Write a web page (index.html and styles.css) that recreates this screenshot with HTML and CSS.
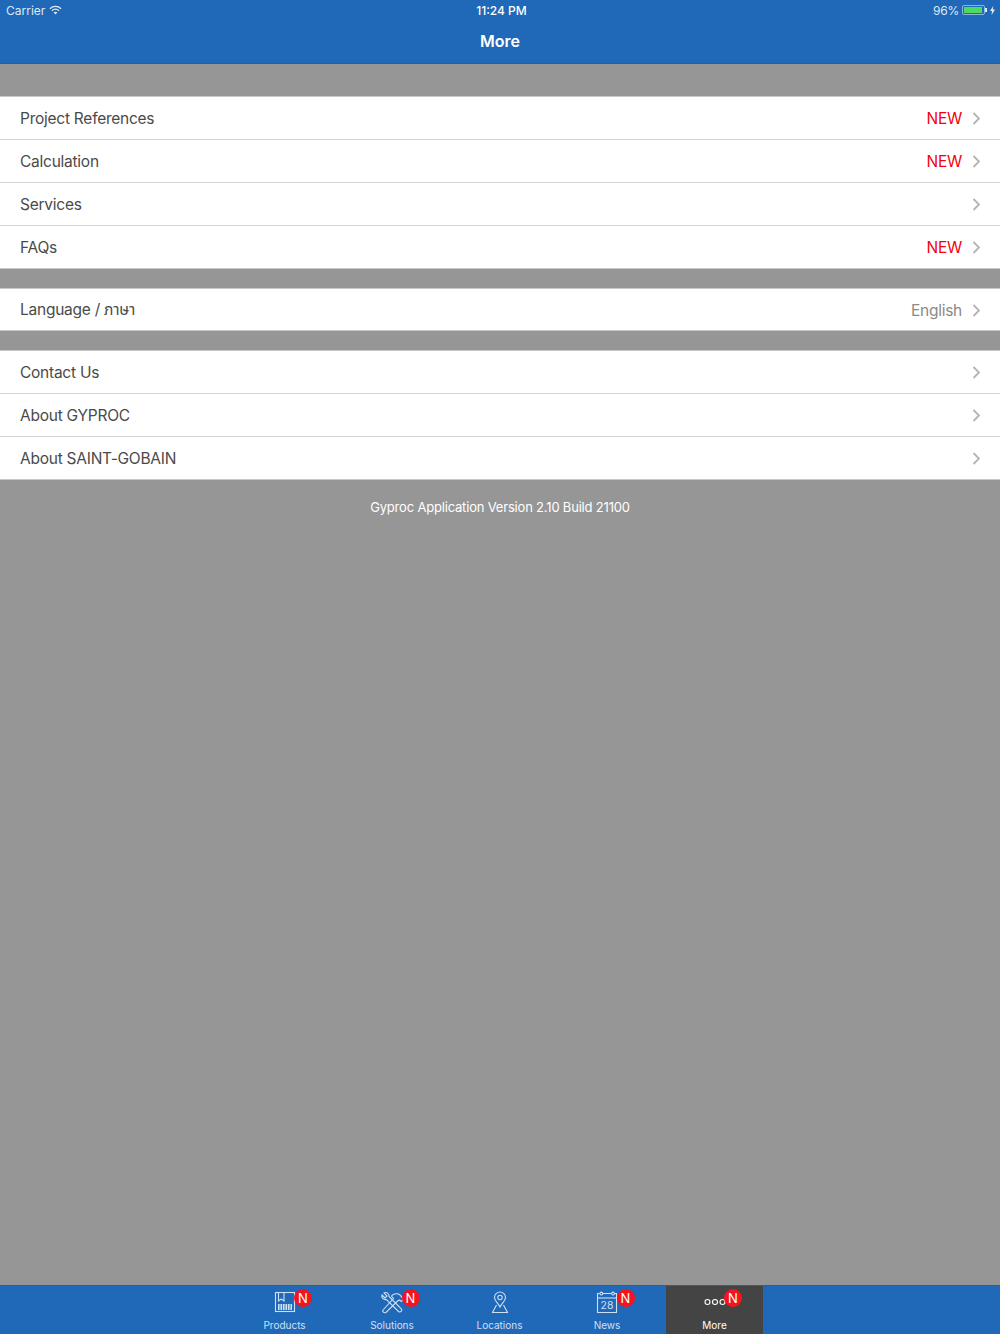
FILE: index.html
```html
<!DOCTYPE html>
<html lang="en">
<head>
  <meta charset="UTF-8" />
  <meta name="viewport" content="width=device-width, initial-scale=1.0" />
  <title>More</title>
  <link rel="stylesheet" href="styles.css">
</head>
<body>
  <header class="top-bar">
    <div class="status-bar">
      <div class="status-left">
        <span>Carrier</span>
        <svg class="wifi" width="13" height="10" viewBox="0 0 14 10">
          <path d="M1 3.6C4.4 .4 9.6 .4 13 3.6" fill="none" stroke="currentColor" stroke-width="1.4"/>
          <path d="M3.2 5.7C5.4 3.8 8.6 3.8 10.8 5.7" fill="none" stroke="currentColor" stroke-width="1.4"/>
          <path d="M5 7.6 7 9.8 9 7.6C7.8 6.6 6.2 6.6 5 7.6Z" fill="currentColor"/>
        </svg>
      </div>
      <div class="status-time">11:24 PM</div>
      <div class="status-right">
        <span class="status-battery-text">96%</span>
        <div class="battery"><div class="battery-level"></div></div>
        <div class="battery-tip"></div>
        <svg class="bolt" width="5" height="9" viewBox="0 0 5 9"><path d="M3.2 0 0 5h2L1.6 9 5 3.6H2.9Z" fill="currentColor"/></svg>
      </div>
    </div>
    <h1 class="nav-title">More</h1>
  </header>

  <main class="content">
    <ul class="group group-first">
      <li class="row"><span>Project References</span><span class="row-value new">NEW</span><svg class="chevron" width="8" height="13" viewBox="0 0 8 13"><path d="M1.500 1l5.500 5.500L1.500 12"/></svg></li>
      <li class="row"><span>Calculation</span><span class="row-value new">NEW</span><svg class="chevron" width="8" height="13" viewBox="0 0 8 13"><path d="M1.500 1l5.500 5.500L1.500 12"/></svg></li>
      <li class="row"><span>Services</span><svg class="chevron" width="8" height="13" viewBox="0 0 8 13"><path d="M1.500 1l5.500 5.500L1.500 12"/></svg></li>
      <li class="row"><span>FAQs</span><span class="row-value new">NEW</span><svg class="chevron" width="8" height="13" viewBox="0 0 8 13"><path d="M1.500 1l5.500 5.500L1.500 12"/></svg></li>
    </ul>
    <ul class="group group-language">
      <li class="row"><span>Language / ภาษา</span><span class="row-value">English</span><svg class="chevron" width="8" height="13" viewBox="0 0 8 13"><path d="M1.500 1l5.500 5.500L1.500 12"/></svg></li>
    </ul>
    <ul class="group">
      <li class="row"><span>Contact Us</span><svg class="chevron" width="8" height="13" viewBox="0 0 8 13"><path d="M1.500 1l5.500 5.500L1.500 12"/></svg></li>
      <li class="row"><span>About GYPROC</span><svg class="chevron" width="8" height="13" viewBox="0 0 8 13"><path d="M1.500 1l5.500 5.500L1.500 12"/></svg></li>
      <li class="row"><span>About SAINT-GOBAIN</span><svg class="chevron" width="8" height="13" viewBox="0 0 8 13"><path d="M1.500 1l5.500 5.500L1.500 12"/></svg></li>
    </ul>
    <p class="version">Gyproc Application Version 2.10 Build 21100</p>
  </main>

  <nav class="tab-bar">
    <div class="tab">
      <svg class="tab-icon" width="24" height="24" viewBox="0 0 24 24">
        <rect x="2.500" y="3.500" width="19" height="19"/>
        <path d="M5.500 3.500V12L8.200 10 11 12V3.500"/>
        <path class="solid" d="M5 15H19V21H5Z"/>
        <path class="cut" d="M7 15V21M9.500 15V21M12 15V21M14.500 15V21M17 15V21"/>
      </svg>
      <span class="tab-badge">N</span>
      <span class="tab-label">Products</span>
    </div>
    <div class="tab">
      <svg class="tab-icon" width="26" height="24" viewBox="0 0 26 24">
        <g transform="translate(0 1.500)">
          <path d="M3 4.500 6 7.500 8 5.500 5 2.500C7.500 1.200 10.500 3 10 6L22.500 18.500C23.500 20 21.500 22.500 19.500 21L7.500 9C4.500 9.500 2 7 3 4.500Z"/>
          <path d="M4 19.500 14.500 8 12.500 5.500C14.500 3 18.500 2.500 21 4.500L24.500 9 22.500 11 20.500 9.500 18.500 10.500 7 22C5 23 3 21 4 19.500Z"/>
        </g>
      </svg>
      <span class="tab-badge">N</span>
      <span class="tab-label">Solutions</span>
    </div>
    <div class="tab">
      <svg class="tab-icon" width="20" height="24" viewBox="0 0 20 24">
        <path d="M10 18C7.500 13.500 4.500 11.500 4.500 8.500A5.500 5.500 0 0 1 15.500 8.500C15.500 11.500 12.500 13.500 10 18Z"/>
        <circle cx="10" cy="8.500" r="2.200"/>
        <path d="M6.500 16 2.500 23.500H17.500L13.500 16"/>
      </svg>
      <span class="tab-label">Locations</span>
    </div>
    <div class="tab">
      <svg class="tab-icon" width="24" height="24" viewBox="0 0 24 24">
        <path d="M4.500 4.500H2.500V23.500H21.500V4.500H19.500M8 4.500H16"/>
        <path d="M2.500 9H21.500"/>
        <circle cx="6.300" cy="4.500" r="1.400"/>
        <circle cx="18" cy="4.500" r="1.400"/>
      </svg>
      <span class="tab-date">28</span>
      <span class="tab-badge">N</span>
      <span class="tab-label">News</span>
    </div>
    <div class="tab tab-active">
      <svg class="tab-icon" width="24" height="24" viewBox="0 0 24 24">
        <circle cx="4.500" cy="13" r="2.500"/>
        <circle cx="12" cy="13" r="2.500"/>
        <circle cx="19.500" cy="13" r="2.500"/>
      </svg>
      <span class="tab-badge">N</span>
      <span class="tab-label">More</span>
    </div>
  </nav>
</body>
</html>
```

FILE: styles.css
```css
:root {
  --blue: #2068b8;
  --grey: #969696;
  --line: #c8c8c8;
  --text: #4a4a4a;
}
* { box-sizing: border-box; }
html, body { height: 100%; }
body {
  margin: 0;
  height: 1334px;
  display: flex;
  flex-direction: column;
  font-family: Inter, "Noto Sans Thai", "Noto Sans", sans-serif;
  background: var(--grey);
  color: var(--text);
}
.top-bar {
  height: 64px;
  background: var(--blue);
  border-bottom: 1px solid #3c5a7c;
  color: #fff;
}
.status-bar {
  height: 20px;
  padding: 0 5px 0 6px;
  display: grid;
  grid-template-columns: 1fr auto 1fr;
  align-items: center;
  font-size: 12px;
  color: #dfe9f5;
}
.status-left { display: flex; align-items: center; gap: 4px; }
.status-time { font-weight: 500; color: #fff; padding-left: 2px; }
.status-right { display: flex; align-items: center; justify-content: flex-end; }
.status-battery-text { letter-spacing: -0.200px; }
.battery {
  width: 23px;
  height: 10px;
  margin-left: 3px;
  padding: 1px;
  border: 1px solid #8fb4dc;
  border-radius: 2px;
}
.battery-level { width: 96%; height: 100%; background: #4cd964; }
.battery-tip {
  width: 2px;
  height: 4px;
  background: #dfe9f5;
  margin-right: 3px;
}
.nav-title {
  margin: 0;
  height: 43px;
  line-height: 43px;
  text-align: center;
  font-size: 16px;
  font-weight: 600;
}
.content { flex: 1; }
.group {
  list-style: none;
  margin: 19px 0 0;
  padding: 0;
  background: #fff;
  border-top: 1px solid var(--line);
  border-bottom: 1px solid var(--line);
}
.group-first { margin-top: 32px; }
.row {
  height: 43px;
  padding: 0 20px;
  display: flex;
  align-items: center;
  font-size: 15.500px;
  letter-spacing: -0.250px;
  border-bottom: 1px solid #d4d4d4;
}
.row:last-child { height: 42px; border-bottom: none; }
.group-language .row { height: 41px; padding-top: 1px; }
.row-value { margin-left: auto; color: #8a8a8a; }
.row-value.new { color: #f5000f; }
.chevron {
  margin-left: 10px;
  fill: none;
  stroke: #b4b4b4;
  stroke-width: 1.800;
}
.row > span:first-child + .chevron { margin-left: auto; }
.version {
  margin: 19px 0 0;
  text-align: center;
  font-size: 13px;
  letter-spacing: -0.190px;
  line-height: 16px;
  color: #fff;
}
.tab-bar {
  height: 49px;
  background: var(--blue);
  border-top: 1px solid #3c5a7c;
  display: flex;
  justify-content: center;
  padding-right: 1px;
}
.tab {
  position: relative;
  width: 97px;
  margin: 0 5.250px;
  display: flex;
  flex-direction: column;
  align-items: center;
  color: #cfe0f2;
}
.tab-active { background: #444; color: #fff; }
.tab-icon {
  margin-top: 3px;
  height: 24px;
  fill: none;
  stroke: currentColor;
  stroke-width: 1.100;
  overflow: visible;
}
.tab-icon .solid { fill: currentColor; stroke: none; }
.tab-icon .cut { stroke: var(--blue); stroke-width: 0.800; }
.tab-label {
  margin-top: 5px;
  font-size: 10px;
  line-height: 14px;
}
.tab-badge {
  position: absolute;
  top: 3px;
  left: 58px;
  width: 18px;
  height: 18px;
  border-radius: 50%;
  background: #f5141e;
  color: #fff;
  font-size: 13px;
  line-height: 18px;
  text-align: center;
}
.tab-date {
  position: absolute;
  top: 13px;
  left: 0;
  right: 0;
  text-align: center;
  font-size: 10.500px;
  line-height: 13px;
}
```
